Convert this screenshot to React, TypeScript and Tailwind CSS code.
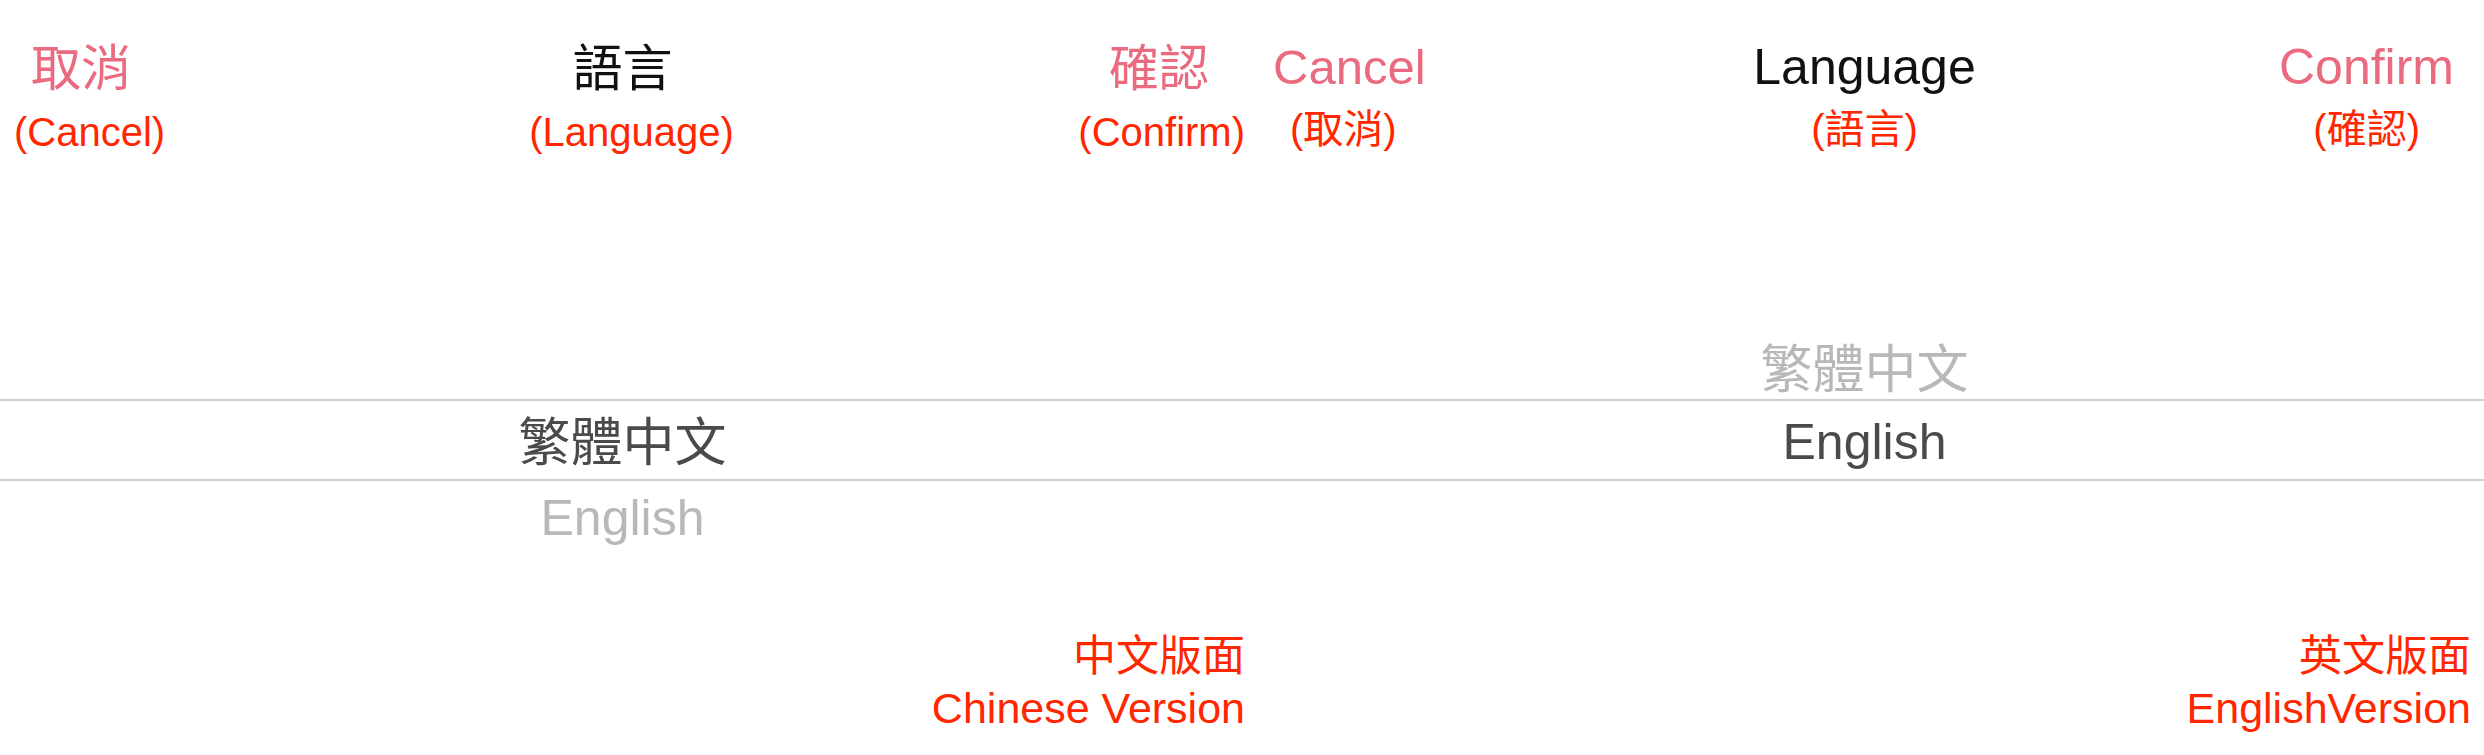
import React from 'react';

// iOS-style language picker, shown twice: Chinese UI on the left, English UI on the right.

const PINK = 'text-[#ea6b80]';

export default function App() {
    return (
        <div className="grid h-[755px] w-[2484px] grid-cols-[1245px_1239px] overflow-hidden bg-white font-['Liberation_Sans','Noto_Sans_CJK_TC',sans-serif]">
            {/* Chinese version */}
            <section className="flex flex-col">
                <header className="flex h-[144px] flex-none pt-[42px]">
                    <div className="flex w-[300px] flex-col items-start">
                        <span className={`ml-[31px] mt-[2px] text-[50px] leading-[50px] ${PINK}`}>取消</span>
                        <span className="ml-[14px] mt-[18px] text-[40px] leading-[40px] text-[#ff2600]">(Cancel)</span>
                    </div>
                    <div className="flex flex-1 flex-col items-center">
                        <span className="mt-[2px] text-[50px] leading-[50px] text-[#111111]">語言</span>
                        <span className="ml-[18px] mt-[18px] text-[40px] leading-[40px] text-[#ff2600]">(Language)</span>
                    </div>
                    <div className="flex w-[300px] flex-col items-end">
                        <span className={`mr-[36px] mt-[2px] text-[50px] leading-[50px] ${PINK}`}>確認</span>
                        <span className="mt-[18px] text-[40px] leading-[40px] text-[#ff2600]">(Confirm)</span>
                    </div>
                </header>

                <div className="mt-[179px] flex flex-col text-center">
                    <div className="h-[76px]" />
                    <div className="h-[82px] border-y-2 border-[#cfcfcf] pt-[16px] text-[52px] leading-[52px] text-[#4a4a4a]">繁體中文</div>
                    <div className="h-[76px] pt-[12px] text-[50px] leading-[50px] text-[#b8b8b8]">English</div>
                </div>

                <footer className="mt-[78px] flex flex-col items-end">
                    <span className="text-[43px] leading-[43px] text-[#ff2600]">中文版面</span>
                    <span className="mt-[9px] text-[43px] leading-[43px] text-[#ff2600]">Chinese Version</span>
                </footer>
            </section>

            {/* English version */}
            <section className="flex flex-col">
                <header className="flex h-[144px] flex-none pt-[42px]">
                    <div className="flex w-[300px] flex-col items-start">
                        <span className={`ml-[28px] text-[49px] leading-[50px] ${PINK}`}>Cancel</span>
                        <span className="ml-[45px] mt-[17px] text-[40px] leading-[40px] text-[#ff2600]">(取消)</span>
                    </div>
                    <div className="flex flex-1 flex-col items-center">
                        <span className="text-[50px] leading-[50px] text-[#111111]">Language</span>
                        <span className="mt-[17px] text-[40px] leading-[40px] text-[#ff2600]">(語言)</span>
                    </div>
                    <div className="flex w-[300px] flex-col items-end">
                        <span className={`mr-[30px] text-[50px] leading-[50px] ${PINK}`}>Confirm</span>
                        <span className="mr-[64px] mt-[17px] text-[40px] leading-[40px] text-[#ff2600]">(確認)</span>
                    </div>
                </header>

                <div className="mt-[179px] flex flex-col text-center">
                    <div className="h-[76px] pt-[21px] text-[52px] leading-[52px] text-[#b8b8b8]">繁體中文</div>
                    <div className="h-[82px] border-y-2 border-[#cfcfcf] pt-[16px] text-[50px] leading-[50px] text-[#4a4a4a]">English</div>
                    <div className="h-[76px]" />
                </div>

                <footer className="mt-[78px] flex flex-col items-end pr-[13px]">
                    <span className="text-[43px] leading-[43px] text-[#ff2600]">英文版面</span>
                    <span className="mt-[9px] text-[43px] leading-[43px] text-[#ff2600]">EnglishVersion</span>
                </footer>
            </section>
        </div>
    );
}
